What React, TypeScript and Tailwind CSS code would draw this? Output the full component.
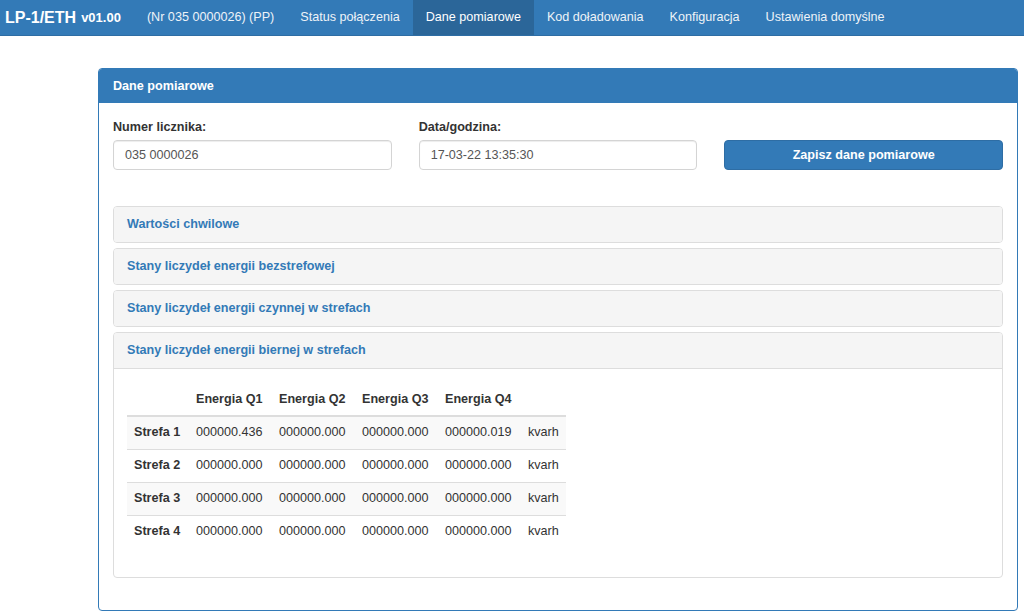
import React from "react";

const navItems = [
  "(Nr 035 0000026) (PP)",
  "Status połączenia",
  "Dane pomiarowe",
  "Kod doładowania",
  "Konfiguracja",
  "Ustawienia domyślne",
];

const rows = [
  ["Strefa 1", "000000.436", "000000.000", "000000.000", "000000.019"],
  ["Strefa 2", "000000.000", "000000.000", "000000.000", "000000.000"],
  ["Strefa 3", "000000.000", "000000.000", "000000.000", "000000.000"],
  ["Strefa 4", "000000.000", "000000.000", "000000.000", "000000.000"],
];

function AccHeader({ title }: { title: string }) {
  return (
    <div className="h-[35px] flex items-center px-[13px] bg-[#f5f5f5] text-[#337ab7] font-bold text-[12.6px]">
      {title}
    </div>
  );
}

export default function App() {
  return (
    <div
      className="min-h-[615px] bg-white text-[#333]"
      style={{ fontFamily: '"Liberation Sans", Arial, Helvetica, sans-serif' }}
    >
      <nav className="h-[36px] bg-[#337ab7] border-b border-[#2e6da4] flex items-stretch">
        <div className="flex items-center pl-[5px] pr-[13px] text-white font-bold">
          <span className="text-[16px]">LP-1/ETH</span>
          <span className="text-[13px] ml-[5px]">v01.00</span>
        </div>
        {navItems.map((t) => (
          <div
            key={t}
            className={`flex items-center px-[13px] text-[12.6px] ${
              t === "Dane pomiarowe" ? "bg-[#2b6699] text-white" : "text-[#eef3f8]"
            }`}
          >
            {t}
          </div>
        ))}
      </nav>

      <div className="mt-[32px] ml-[98px] mr-[6px] border border-[#337ab7] rounded-[4px] overflow-hidden">
        <div className="h-[34px] bg-[#337ab7] flex items-center px-[14px] text-white font-bold text-[12.6px]">
          Dane pomiarowe
        </div>
        <div className="px-[14px] pt-[16px] pb-[14px]">
          <div className="grid grid-cols-3 gap-x-[27px] items-end">
            <div>
              <div className="font-bold text-[12.6px] mb-[5px] leading-[16px]">Numer licznika:</div>
              <div className="h-[30px] border border-[#d4d4d4] rounded-[4px] flex items-center px-[11px] text-[12.6px] text-[#555] shadow-[inset_0_1px_1px_rgba(0,0,0,0.075)]">
                035 0000026
              </div>
            </div>
            <div>
              <div className="font-bold text-[12.6px] mb-[5px] leading-[16px]">Data/godzina:</div>
              <div className="h-[30px] border border-[#d4d4d4] rounded-[4px] flex items-center px-[11px] text-[12.6px] text-[#555] shadow-[inset_0_1px_1px_rgba(0,0,0,0.075)]">
                17-03-22 13:35:30
              </div>
            </div>
            <div>
              <div className="h-[30px] bg-[#337ab7] border border-[#2e6da4] rounded-[4px] flex items-center justify-center text-white font-bold text-[12.6px]">
                Zapisz dane pomiarowe
              </div>
            </div>
          </div>

          <div className="mt-[36px] flex flex-col gap-[5px] mb-[18px]">
            <div className="border border-[#ddd] rounded-[4px] overflow-hidden">
              <AccHeader title="Wartości chwilowe" />
            </div>
            <div className="border border-[#ddd] rounded-[4px] overflow-hidden">
              <AccHeader title="Stany liczydeł energii bezstrefowej" />
            </div>
            <div className="border border-[#ddd] rounded-[4px] overflow-hidden">
              <AccHeader title="Stany liczydeł energii czynnej w strefach" />
            </div>
            <div className="border border-[#ddd] rounded-[4px] overflow-hidden">
              <AccHeader title="Stany liczydeł energii biernej w strefach" />
              <div className="border-t border-[#ddd] px-[13px] pt-[15px] pb-[11px]">
                <table className="border-collapse text-[12.6px] mb-[18px]">
                  <thead>
                    <tr className="h-[32px]">
                      <th className="w-[62px] border-b-2 border-[#ddd]"></th>
                      {["Energia Q1", "Energia Q2", "Energia Q3", "Energia Q4"].map((h) => (
                        <th key={h} className="w-[83px] text-left font-bold px-[7px] border-b-2 border-[#ddd]">
                          {h}
                        </th>
                      ))}
                      <th className="w-[45px] border-b-2 border-[#ddd]"></th>
                    </tr>
                  </thead>
                  <tbody>
                    {rows.map((r, i) => (
                      <tr key={r[0]} className={`h-[33px] ${i % 2 === 0 ? "bg-[#f9f9f9]" : ""} ${i > 0 ? "border-t border-[#ddd]" : ""}`}>
                        <td className="px-[7px] font-bold">{r[0]}</td>
                        {r.slice(1).map((v, j) => (
                          <td key={j} className="px-[7px]">{v}</td>
                        ))}
                        <td className="px-[7px]">kvarh</td>
                      </tr>
                    ))}
                  </tbody>
                </table>
              </div>
            </div>
          </div>
        </div>
      </div>
    </div>
  );
}
